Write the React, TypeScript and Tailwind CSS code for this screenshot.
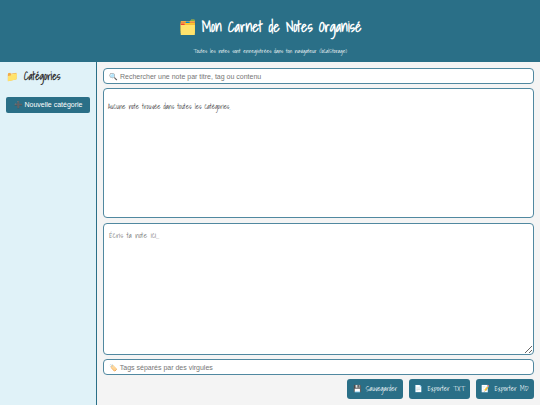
const hand = "font-['Shadows_Into_Light','Liberation_Sans_Narrow',cursive]";
const field =
  "block w-full rounded-[4px] border border-[#5088a0] bg-white px-[5px] text-[#333333] outline-none placeholder:text-[#757575] placeholder:opacity-100";
const actions = [
  { icon: "💾", label: "Sauvegarder", width: "w-[56px]" },
  { icon: "📄", label: "Exporter TXT", width: "w-[61px]" },
  { icon: "📝", label: "Exporter MD", width: "w-[58px]" },
];

export default function App() {
  return (
    <div className={`flex min-h-screen flex-col bg-[#f4f4f4] text-[7px] text-[#333333] ${hand}`}>
      <header className="flex flex-col items-center bg-[#2a6f87] pt-4 pb-[5px] text-white">
        <h1 className="flex h-[22px] items-center gap-[6px] text-[14px] leading-[22px] font-bold whitespace-nowrap">
          <span>🗂️</span>
          <span>Mon Carnet de Notes Organisé</span>
        </h1>
        <p className="mt-[7px] text-[6px] leading-[12px]">
          Toutes les notes sont enregistrées dans ton navigateur (localStorage)
        </p>
      </header>
      <div className="flex flex-1">
        <aside className="w-[97px] shrink-0 border-r border-[#2a6f87] bg-[#e0f2f8] px-[6px] pt-[5px]">
          <h2 className="flex items-center gap-[6px] text-[10px] leading-[18px] font-bold">
            <span>📁</span>
            <span>Catégories</span>
          </h2>
          <button
            type="button"
            className="mt-3 flex h-[16px] w-full items-center justify-center gap-[2px] rounded-[2px] bg-[#2a6f87] font-['Liberation_Sans',Arial,sans-serif] text-[7px] whitespace-nowrap text-white"
          >
            <span className="text-[#555555]">➕</span>
            <span>Nouvelle catégorie</span>
          </button>
        </aside>
        <main className="flex min-w-0 flex-1 flex-col px-[6px] pt-[6px] pb-[6px]">
          <input
            type="search"
            aria-label="Rechercher une note"
            placeholder="🔍 Rechercher une note par titre, tag ou contenu"
            className={`${field} h-[16px] shrink-0 font-['Liberation_Sans',Arial,sans-serif] text-[7px]`}
          />
          <section className="mt-1 flex-1 basis-[130px] rounded-[4px] border border-[#5088a0] bg-white px-1 pt-3">
            <p className="text-[7px] leading-[12px]">Aucune note trouvée dans toutes les catégories.</p>
          </section>
          <textarea
            aria-label="Contenu de la note"
            placeholder="Écris ta note ici..."
            className={`${field} mt-[5px] flex-1 basis-[132px] resize-y pt-[5px] text-[8px] leading-[12px]`}
          />
          <input
            type="text"
            aria-label="Tags"
            placeholder="🏷️ Tags séparés par des virgules"
            className={`${field} mt-1 h-[16px] shrink-0 font-['Liberation_Sans',Arial,sans-serif] text-[7px]`}
          />
          <div className="mt-1 flex justify-end gap-[6px]">
            {actions.map((action) => (
              <button
                key={action.label}
                type="button"
                className={`flex h-[20px] items-center justify-center gap-1 rounded-[3px] bg-[#2a6f87] text-[7px] whitespace-nowrap text-white ${action.width}`}
              >
                <span>{action.icon}</span>
                <span>{action.label}</span>
              </button>
            ))}
          </div>
        </main>
      </div>
    </div>
  );
}
